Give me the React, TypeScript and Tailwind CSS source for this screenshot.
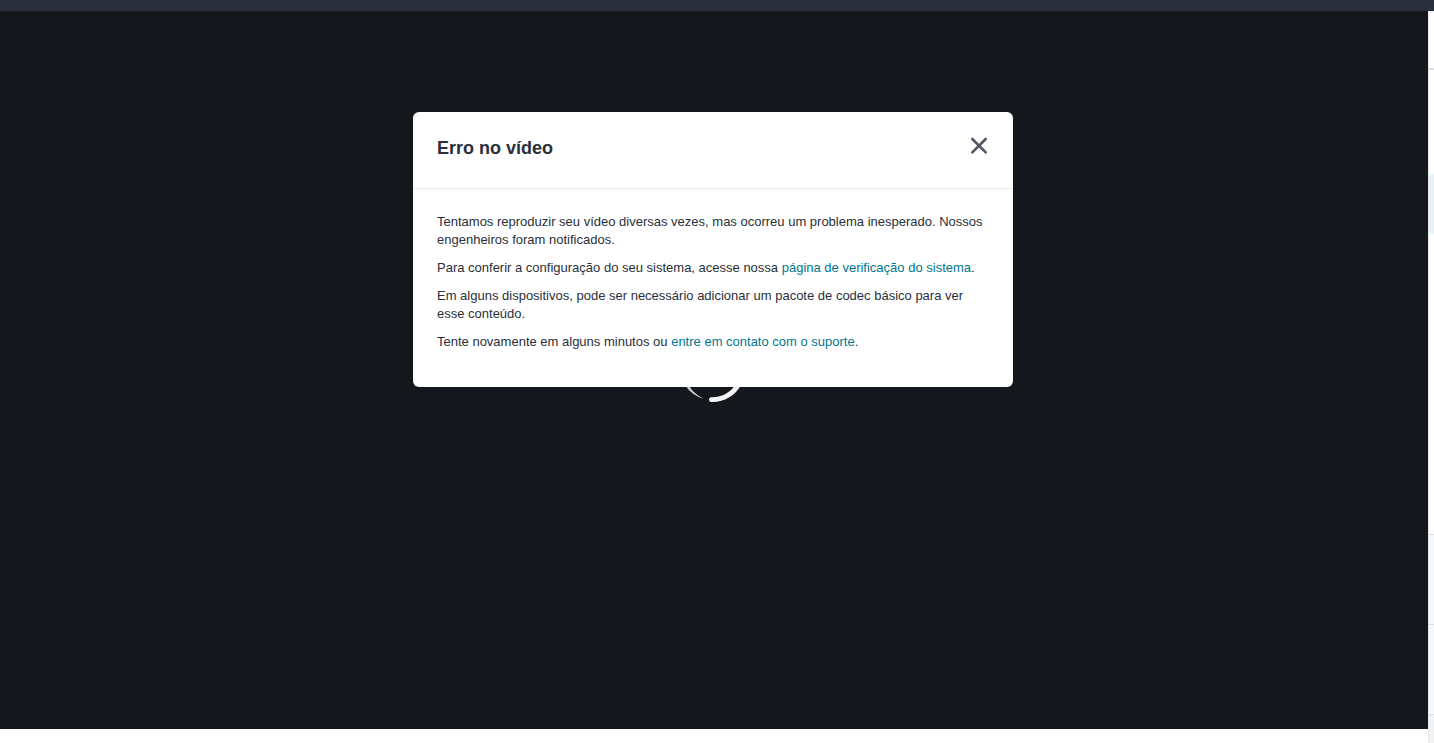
const linkClass = "text-[#007791] hover:underline";

function CloseIcon() {
  return (
    <svg width="18" height="18" viewBox="0 0 18 18" fill="none" stroke="#505763" strokeWidth="2.6" strokeLinecap="round" aria-hidden="true">
      <path d="M2.300 2 15.700 15.400M15.700 2 2.300 15.400" />
    </svg>
  );
}

function Spinner() {
  return (
    <svg className="h-16 w-16" viewBox="0 0 64 64" aria-hidden="true">
      <path
        d="M28 61.5 A2.2 2.2 0 0 1 30 59.3 A27.7 27.7 0 0 0 56 44 L60.5 46 A32 32 0 0 1 30 63.9 A2.2 2.2 0 0 1 28 61.5Z"
        fill="#f5f5f5"
      />
      <path d="M22 60.600 A32 32 0 0 1 4.300 47.500 L7.200 46 A30 30 0 0 0 22 60.200Z" fill="#c9cacb" />
    </svg>
  );
}

function Sidebar() {
  return (
    <aside className="flex w-1.5 shrink-0 flex-col border-l border-t border-[#e8e9eb] bg-white">
      <div className="h-14" />
      <div className="h-0.5 bg-[#dedfe0]" />
      <div className="h-[104px]" />
      <div className="h-[60px] bg-[#e6f2f5]" />
      <div className="h-[300px]" />
      <div className="h-[90px] border-t border-[#dedfe0] bg-[#f7f8fa]" />
      <div className="h-[90px] border-t border-[#dedfe0] bg-[#f7f8fa]" />
      <div className="grow border-t border-[#dedfe0] bg-[#f2f3f5]" />
    </aside>
  );
}

function ErrorDialog() {
  return (
    <section
      role="dialog"
      aria-labelledby="error-title"
      className="absolute inset-x-0 top-[101px] mx-auto w-full max-w-[600px] rounded-md bg-white text-[#29303b]"
    >
      <header className="flex items-start justify-between border-b border-[#e8e9eb] px-6 pt-6 pb-7">
        <h1 id="error-title" className="text-lg leading-6 font-bold">
          Erro no vídeo
        </h1>
        <button type="button" aria-label="Fechar" className="flex h-5 w-5 items-center justify-center">
          <CloseIcon />
        </button>
      </header>
      <div className="flex flex-col gap-2.5 px-6 pt-6 pb-9 text-[13px] leading-[18px]">
        <p>
          Tentamos reproduzir seu vídeo diversas vezes, mas ocorreu um problema inesperado. Nossos engenheiros foram
          notificados.
        </p>
        <p>
          Para conferir a configuração do seu sistema, acesse nossa{" "}
          <a href="#sistema" className={linkClass}>página de verificação do sistema</a>.
        </p>
        <p>
          Em alguns dispositivos, pode ser necessário adicionar um pacote de codec básico para ver esse conteúdo.
        </p>
        <p>
          Tente novamente em alguns minutos ou{" "}
          <a href="#suporte" className={linkClass}>entre em contato com o suporte</a>.
        </p>
      </div>
    </section>
  );
}

export default function App() {
  return (
    <div className="flex min-h-screen flex-col bg-white font-['Liberation_Sans',Arial,sans-serif]">
      <div className="h-[11px] shrink-0 bg-[#29303b]" />
      <div className="flex grow">
        <main className="flex grow flex-col pb-3.5">
          <div className="flex grow bg-[#14171c] pr-0.5">
            <div className="relative flex grow items-center justify-center">
              <Spinner />
              <ErrorDialog />
            </div>
          </div>
        </main>
        <Sidebar />
      </div>
    </div>
  );
}
